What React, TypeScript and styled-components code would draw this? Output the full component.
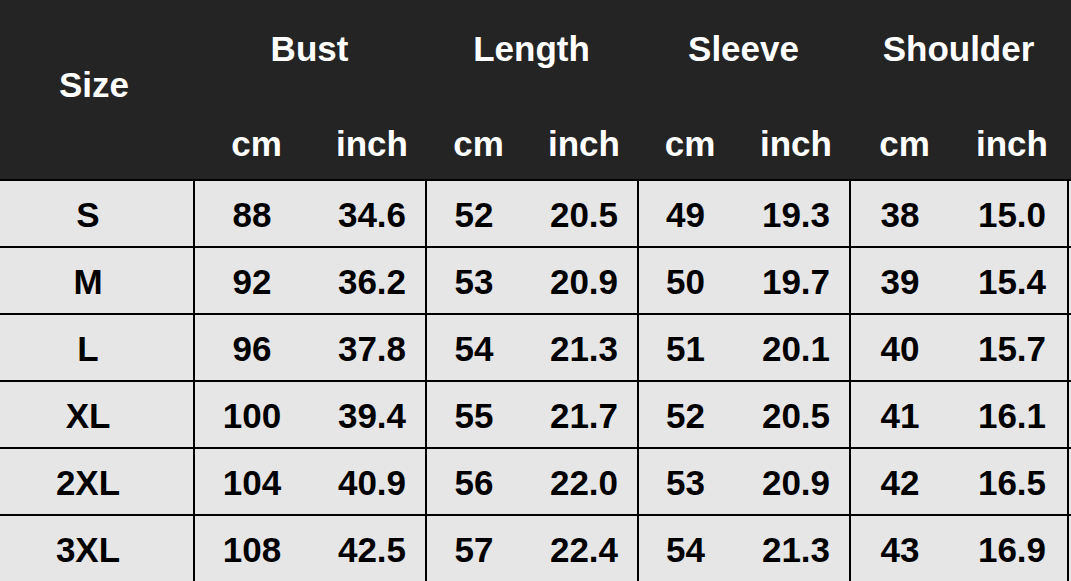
import React from "react";
import styled, { createGlobalStyle } from "styled-components";

const GlobalStyle = createGlobalStyle`
  html, body { margin: 0; padding: 0; background: #e6e6e6; }
  body { font-family: "Liberation Sans", Arial, sans-serif; }
`;

const COLUMNS = "193px 116px 116px 96px 116px 95px 117px 100px 118px 4px";

const Sheet = styled.div`
  width: 1071px;
  height: 581px;
  overflow: hidden;
  font-family: "Liberation Sans", Arial, sans-serif;
  font-weight: 700;
  font-size: 35px;
  line-height: 35px;
`;

const HeaderGrid = styled.div`
  display: grid;
  grid-template-columns: ${COLUMNS};
  grid-template-rows: 98px 81px;
  height: 179px;
  background: #242424;
  color: #ffffff;
`;

const SizeHead = styled.div`
  grid-row: 1 / span 2;
  grid-column: 1;
  text-align: center;
  padding: 67px 5px 0 0;
`;

const GroupHead = styled.div<{ $col: number }>`
  grid-row: 1;
  grid-column: ${(p) => p.$col} / span 2;
  text-align: center;
  padding-top: 31px;
  padding-left: 1px;
`;

const UnitHead = styled.div<{ $shift: number }>`
  grid-row: 2;
  text-align: center;
  padding-top: 28px;
  padding-left: ${(p) => p.$shift}px;
`;

const Row = styled.div`
  display: grid;
  grid-template-columns: ${COLUMNS};
  height: 67px;
  box-sizing: border-box;
  border-top: 2px solid #000;
  background: #e6e6e6;
  color: #000;
`;

const Cell = styled.div<{ $lead?: boolean; $shift?: number; $trim?: number }>`
  display: flex;
  align-items: center;
  justify-content: center;
  box-sizing: border-box;
  padding-top: 2px;
  padding-left: ${(p) => p.$shift ?? 0}px;
  padding-right: ${(p) => p.$trim ?? 0}px;
  border-left: ${(p) => (p.$lead ? "2px solid #000" : "none")};
  white-space: nowrap;
`;

const groups = [
  { name: "Bust", col: 2, inchShift: 10 },
  { name: "Length", col: 4, inchShift: 10 },
  { name: "Sleeve", col: 6, inchShift: 11 },
  { name: "Shoulder", col: 8, inchShift: 8 },
];

const rows: [string, ...string[]][] = [
  ["S", "88", "34.6", "52", "20.5", "49", "19.3", "38", "15.0"],
  ["M", "92", "36.2", "53", "20.9", "50", "19.7", "39", "15.4"],
  ["L", "96", "37.8", "54", "21.3", "51", "20.1", "40", "15.7"],
  ["XL", "100", "39.4", "55", "21.7", "52", "20.5", "41", "16.1"],
  ["2XL", "104", "40.9", "56", "22.0", "53", "20.9", "42", "16.5"],
  ["3XL", "108", "42.5", "57", "22.4", "54", "21.3", "43", "16.9"],
];

export default function App() {
  return (
    <>
      <GlobalStyle />
      <Sheet>
        <HeaderGrid>
          <SizeHead>Size</SizeHead>
          {groups.map((g) => (
            <GroupHead key={g.name} $col={g.col}>
              {g.name}
            </GroupHead>
          ))}
          {groups.map((g) => (
            <React.Fragment key={g.name + "u"}>
              <UnitHead $shift={11}>cm</UnitHead>
              <UnitHead $shift={g.inchShift}>inch</UnitHead>
            </React.Fragment>
          ))}
        </HeaderGrid>
        {rows.map(([size, ...vals]) => (
          <Row key={size}>
            <Cell $trim={17}>{size}</Cell>
            {vals.map((v, i) => (
              <Cell
                key={i}
                $lead={i % 2 === 0}
                $shift={i % 2 === 1 ? groups[Math.floor(i / 2)].inchShift : 0}
              >
                {v}
              </Cell>
            ))}
            <Cell $lead />
          </Row>
        ))}
      </Sheet>
    </>
  );
}
